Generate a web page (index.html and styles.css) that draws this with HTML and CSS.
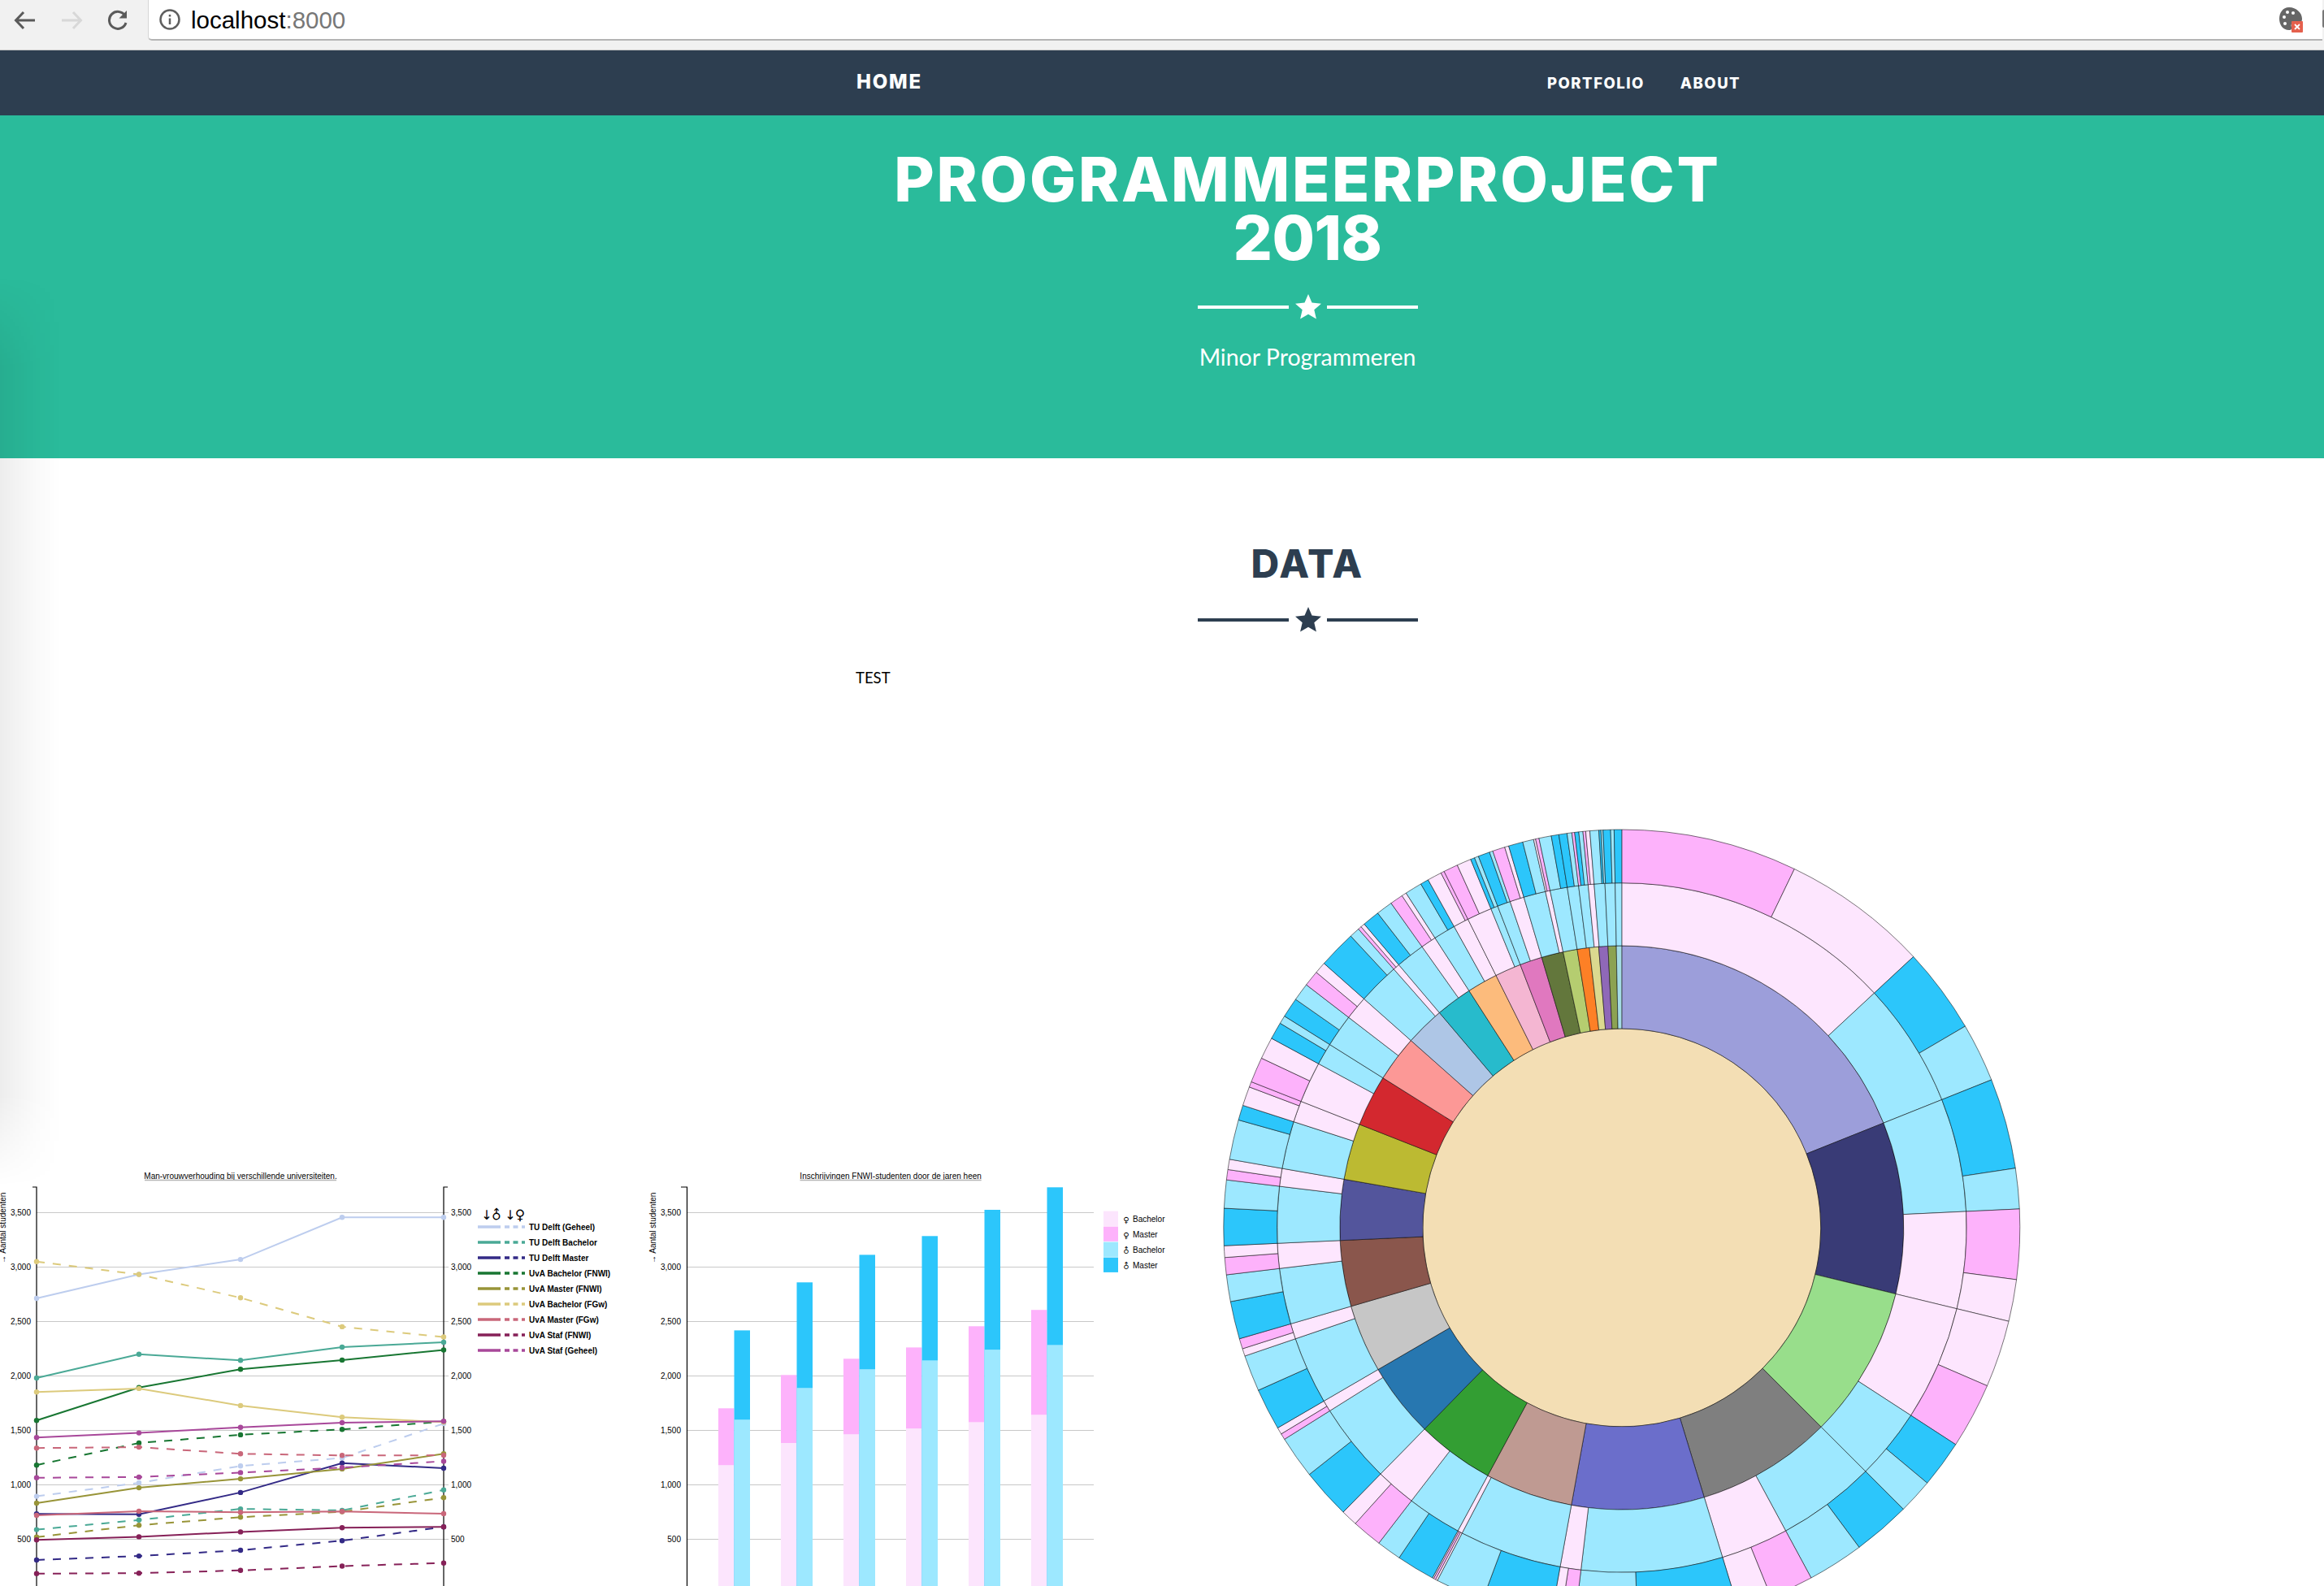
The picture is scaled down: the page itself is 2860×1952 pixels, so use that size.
FILE: index.html
```html
<!DOCTYPE html>
<html lang="en">
<head>
  <meta charset="UTF-8" />
  <title>Programmeerproject 2018</title>
  <link rel="stylesheet" href="styles.css">
</head>
<body>

<!-- browser bar -->
<div class="chrome">
  <div class="chrome-btns">
    <svg class="btn-back" width="28" height="24" viewBox="0 0 28 24"><path d="M26 12H3M12 2L2.5 12L12 22"/></svg>
    <svg class="btn-fwd" width="28" height="24" viewBox="0 0 28 24"><path d="M2 12H25M16 2L25.5 12L16 22"/></svg>
    <svg class="btn-reload" width="28" height="26" viewBox="0 0 28 26"><path d="M23 7.5A10.5 10.5 0 1 0 24 16"/><path class="fill" d="M25 1V10.5H15.5Z"/></svg>
  </div>
  <div class="urlbar">
    <svg class="info" width="26" height="26" viewBox="0 0 26 26"><circle cx="13" cy="13" r="11.5"/><path d="M13 11.5V19M13 7V9.5"/></svg>
    <span class="url">localhost<span class="port">:8000</span></span>
    <svg class="ext" width="30" height="32" viewBox="0 0 30 32">
      <path fill="#666" d="M13 1C5 1 1 8 1 15s4 14 12 14c3 0 4-2 3-4s0-5 3-5h6c3 0 4-2 4-5C29 8 22 1 13 1z"/>
      <circle cx="7" cy="13" r="2" fill="#fff"/><circle cx="11" cy="7" r="2" fill="#fff"/><circle cx="18" cy="8" r="2" fill="#fff"/><circle cx="8" cy="21" r="2" fill="#fff"/>
      <rect x="16" y="18" width="14" height="14" rx="1" fill="#e5604d"/>
      <path stroke="#fff" stroke-width="1.8" d="M20 22l6 6M26 22l-6 6"/>
    </svg>
  </div>
  <span class="chrome-edge"></span>
</div>

<nav class="topnav">
  <a class="brand" href="#">HOME</a>
  <ul class="nav-links">
    <li><a href="#">PORTFOLIO</a></li>
    <li><a href="#">ABOUT</a></li>
  </ul>
</nav>

<header class="hero">
  <h1>PROGRAMMEERPROJECT<br><span class="year">2018</span></h1>
  <div class="divider divider-light">
    <span class="divider-line"></span>
    <svg class="divider-star" viewBox="0 0 32 31"><polygon points="16,0 20.5,10.6 32,11.7 23.3,19.3 25.9,30.6 16,24.7 6.1,30.6 8.7,19.3 0,11.7 11.5,10.6"/></svg>
    <span class="divider-line"></span>
  </div>
  <p class="subtitle">Minor Programmeren</p>
</header>

<section class="data">
  <h2>DATA</h2>
  <div class="divider divider-dark">
    <span class="divider-line"></span>
    <svg class="divider-star" viewBox="0 0 32 31"><polygon points="16,0 20.5,10.6 32,11.7 23.3,19.3 25.9,30.6 16,24.7 6.1,30.6 8.7,19.3 0,11.7 11.5,10.6"/></svg>
    <span class="divider-line"></span>
  </div>
  <p class="test">TEST</p>
</section>

<section class="charts">
  <svg id="lineChart" class="chart-line" width="780" height="593"></svg>
  <svg id="barChart" class="chart-bar" width="620" height="593"></svg>
  <svg id="sunburst" class="chart-sun" width="1000" height="1004"></svg>
</section>

<div class="edge-shade"></div>

<script src="charts.js"></script>
</body>
</html>
```

FILE: styles.css
```css
* {
  box-sizing: border-box;
}

html, body {
  height: 100%;
}

body {
  margin: 0;
  height: 1952px;
  overflow: hidden;
  position: relative;
  background: #fff;
  font-family: "Liberation Sans", Arial, sans-serif;
  color: #000;
}

/* browser bar */
.chrome {
  display: flex;
  height: 62px;
  background: #f1f1f1;
  border-bottom: 1px solid #c9c9c9;
}

.chrome-btns {
  width: 182px;
  flex: none;
  display: flex;
  align-items: center;
  height: 50px;
  padding-left: 17px;
  gap: 29px;
}

.chrome-btns svg {
  fill: none;
  stroke-width: 3;
}

.btn-back { stroke: #5a5a5a; }
.btn-fwd { stroke: #d8d8d8; }
.btn-reload { stroke: #5a5a5a; }
.btn-reload .fill { fill: #5a5a5a; stroke: none; }

.urlbar {
  flex: 1;
  height: 50px;
  background: #fff;
  border-bottom: 2px solid #b4b4b4;
  border-left: 1px solid #d5d5d5;
  border-bottom-left-radius: 5px;
  display: flex;
  align-items: center;
  padding-left: 13px;
}

.info {
  fill: none;
  stroke: #5f5f5f;
  stroke-width: 2.5;
  flex: none;
}

.url {
  margin-left: 13px;
  padding-top: 2px;
  font-size: 29.5px;
  color: #000;
}

.port {
  color: #777;
}

.ext {
  margin-left: auto;
  margin-right: 24px;
  flex: none;
}

.chrome-edge {
  width: 2px;
  height: 22px;
  margin-top: 12px;
  background: #777;
  border-radius: 2px 0 0 2px;
}

/* nav */
.topnav {
  height: 80px;
  background: #2d3e50;
  display: flex;
  align-items: center;
  padding-left: 1054px;
}

.topnav a {
  color: #fff;
  text-decoration: none;
  font-family: Inter, "Open Sans", sans-serif;
  font-weight: 800;
}

.brand {
  font-size: 24px;
  letter-spacing: 1.8px;
  margin-top: -3px;
}

.nav-links {
  list-style: none;
  margin: 0 0 0 769px;
  padding: 0;
  display: flex;
  gap: 44px;
  font-size: 18.5px;
  letter-spacing: 1.5px;
}

/* hero */
.hero {
  height: 422px;
  background: #2abb9b;
  color: #fff;
  text-align: center;
  padding: 42px 0 0 358px;
}

.hero h1 {
  margin: 0;
  font-family: Inter, "Open Sans", sans-serif;
  font-weight: 800;
  font-size: 76px;
  line-height: 72px;
  letter-spacing: 2.7px;
}

.year {
  letter-spacing: -0.5px;
}

.divider {
  display: flex;
  justify-content: center;
  align-items: center;
  margin-top: 34px;
}

.divider-line {
  width: 112px;
  height: 4px;
}

.divider-star {
  width: 32px;
  height: 31px;
  margin: 0 7px 0 8px;
}

.divider-light .divider-line { background: #fff; }
.divider-light .divider-star { fill: #fff; }
.divider-dark .divider-line { background: #2d3e50; }
.divider-dark .divider-star { fill: #2d3e50; }

.subtitle {
  margin: 26px 0 0;
  font-family: Lato, sans-serif;
  font-size: 28.5px;
  line-height: 40px;
}

/* data section */
.data {
  padding: 100px 0 0 358px;
  text-align: center;
}

.data h2 {
  margin: 0;
  font-family: Inter, "Open Sans", sans-serif;
  font-weight: 800;
  font-size: 48px;
  line-height: 60px;
  letter-spacing: 2.2px;
  color: #2d3e50;
}

.data .divider {
  margin-top: 23px;
}

.test {
  margin: 44px 0 0 695px;
  font-family: Lato, sans-serif;
  font-size: 18.5px;
  line-height: 24px;
  text-align: left;
}

/* charts */
.charts {
  display: flex;
  align-items: flex-end;
  margin-top: 164px;
}

.charts svg {
  flex: none;
  overflow: visible;
  display: block;
}

.chart-sun {
  margin-left: 90px;
}

.chart-text {
  font-family: "Liberation Sans", Arial, sans-serif;
  font-size: 10px;
  fill: #000;
}

.chart-legend {
  font-weight: bold;
}

.chart-symbol {
  font-family: "DejaVu Sans", sans-serif;
  fill: #000;
}

.grid {
  stroke: #c8c8c8;
  stroke-width: 1.2;
}

.axis {
  stroke: #000;
  stroke-width: 1.2;
  fill: none;
}

.title-rule {
  stroke: #b5b5b5;
  stroke-width: 1.5;
}

.series {
  fill: none;
  stroke-width: 2;
}

.series-dash {
  stroke-dasharray: 10 10;
}

.arc {
  stroke: rgba(0, 0, 0, 0.75);
  stroke-width: 0.7;
}

/* soft shade on the left edge */
.edge-shade {
  position: absolute;
  left: 0;
  top: 340px;
  width: 76px;
  height: 1120px;
  pointer-events: none;
  background: linear-gradient(to right, rgba(0, 0, 0, 0.07), rgba(0, 0, 0, 0.02) 60%, transparent);
  -webkit-mask-image: linear-gradient(to bottom, transparent, #000 10%, #000 90%, transparent);
  mask-image: linear-gradient(to bottom, transparent, #000 10%, #000 90%, transparent);
}
```

FILE: charts.js
```js
const SVGNS = 'http://www.w3.org/2000/svg';

function add(svg, tag, attrs, text) {
  const el = document.createElementNS(SVGNS, tag);
  for (const k in attrs) el.setAttribute(k, attrs[k]);
  if (text !== undefined) el.textContent = text;
  svg.appendChild(el);
  return el;
}

// both value axes share the same scale, 500 students = 67px
const yOf = v => 473.5 - (v - 500) * 0.134;
const TICKS = [500, 1000, 1500, 2000, 2500, 3000, 3500];
const fmt = v => v >= 1000 ? Math.floor(v / 1000) + ',' + String(v % 1000).padStart(3, '0') : String(v);

function title(svg, text, x1, x2) {
  add(svg, 'text', { class: 'chart-text', x: (x1 + x2) / 2, y: 30, 'text-anchor': 'middle' }, text);
  add(svg, 'line', { class: 'title-rule', x1, x2, y1: 31.5, y2: 31.5 });
}

function yLabel(svg, x) {
  add(svg, 'text', { class: 'chart-text', transform: `translate(${x},134) rotate(-90)` }, '→ Aantal studenten');
}

function gender(svg, symbol, x, y, size) {
  // the male sign is turned so its arrow points straight up
  const turn = symbol === '♂' ? ' rotate(-45)' : '';
  add(svg, 'text', {
    class: 'chart-symbol', 'font-size': size, 'text-anchor': 'middle',
    transform: `translate(${x},${y})${turn}`, 'dominant-baseline': 'central'
  }, symbol);
}

/* ---------- line chart ---------- */
const LINE_X = [45, 171, 296, 421, 546];
const SERIES = [
  ['TU Delft (Geheel)', '#bdcdee', [2713, 2933, 3070, 3457, 3457], [895, 1019, 1173, 1247, 1563]],
  ['TU Delft Bachelor', '#4aa996', [1981, 2199, 2143, 2265, 2310], [589, 677, 779, 766, 953]],
  ['TU Delft Master', '#332a86', [733, 730, 930, 1199, 1153], [310, 346, 399, 487, 614]],
  ['UvA Bachelor (FNWI)', '#187632', [1591, 1893, 2062, 2146, 2239], [1181, 1384, 1460, 1510, 1581]],
  ['UvA Master (FNWI)', '#989438', [832, 973, 1055, 1146, 1285], [520, 629, 703, 753, 882]],
  ['UvA Bachelor (FGw)', '#dcca7c', [1852, 1885, 1728, 1622, 1576], [3050, 2933, 2718, 2452, 2358]],
  ['UvA Master (FGw)', '#c9677a', [720, 758, 748, 756, 735], [1338, 1346, 1285, 1270, 1272]],
  ['UvA Staf (FNWI)', '#862158', [495, 523, 568, 606, 614], [184, 189, 214, 254, 282]],
  ['UvA Staf (Geheel)', '#a8489a', [1434, 1477, 1528, 1571, 1584], [1065, 1072, 1113, 1158, 1217]]
];

function drawSeries(svg, vals, color, dashed) {
  const pts = vals.map((v, i) => LINE_X[i] + ',' + yOf(v).toFixed(1)).join(' ');
  add(svg, 'polyline', { class: 'series' + (dashed ? ' series-dash' : ''), points: pts, stroke: color });
  vals.forEach((v, i) => add(svg, 'circle', { cx: LINE_X[i], cy: yOf(v).toFixed(1), r: 3.2, fill: color }));
}

function drawLineChart() {
  const svg = document.getElementById('lineChart');
  title(svg, 'Man-vrouwverhouding bij verschillende universiteiten.', 178, 414);
  yLabel(svg, 6.5);

  TICKS.forEach(t => {
    add(svg, 'line', { class: 'grid', x1: 45, x2: 552, y1: yOf(t), y2: yOf(t) });
    add(svg, 'text', { class: 'chart-text', x: 38, y: yOf(t) + 3.5, 'text-anchor': 'end' }, fmt(t));
    add(svg, 'text', { class: 'chart-text', x: 555, y: yOf(t) + 3.5 }, fmt(t));
  });
  add(svg, 'path', { class: 'axis', d: 'M40 40H45V600' });
  add(svg, 'path', { class: 'axis', d: 'M551 40H546V600' });

  SERIES.forEach(s => {
    drawSeries(svg, s[3], s[1], true);
    drawSeries(svg, s[2], s[1], false);
  });

  // legend
  add(svg, 'text', { class: 'chart-symbol', 'font-size': 16, x: 599, y: 80, 'text-anchor': 'middle' }, '↓');
  gender(svg, '♂', 611, 74, 16);
  add(svg, 'text', { class: 'chart-symbol', 'font-size': 16, x: 628, y: 80, 'text-anchor': 'middle' }, '↓');
  gender(svg, '♀', 640, 74, 17);
  SERIES.forEach((s, i) => {
    const y = 89 + i * 19;
    add(svg, 'line', { x1: 588, x2: 616, y1: y, y2: y, stroke: s[1], 'stroke-width': 3.5 });
    add(svg, 'line', { x1: 621, x2: 646, y1: y, y2: y, stroke: s[1], 'stroke-width': 3.5, 'stroke-dasharray': '6 4.5' });
    add(svg, 'text', { class: 'chart-text chart-legend', x: 651, y: y + 3.5 }, s[0]);
  });
}

/* ---------- bar chart ---------- */
// female bachelor, female master, male bachelor, male master (stacked totals)
const BARS = [
  [1181, 1703, 1599, 2419],
  [1384, 2009, 1890, 2860],
  [1465, 2158, 2062, 3113],
  [1518, 2262, 2143, 3285],
  [1576, 2457, 2242, 3526],
  [1644, 2607, 2285, 3733]
];
const BAR_COLORS = ['#fce5fd', '#fdb2fb', '#9de8ff', '#2cc6fb'];

function drawBarChart() {
  const svg = document.getElementById('barChart');
  title(svg, 'Inschrijvingen FNWI-studenten door de jaren heen', 204.5, 427.7);
  yLabel(svg, 27);

  TICKS.forEach(t => {
    add(svg, 'line', { class: 'grid', x1: 65.5, x2: 566, y1: yOf(t), y2: yOf(t) });
    add(svg, 'text', { class: 'chart-text', x: 58, y: yOf(t) + 3.5, 'text-anchor': 'end' }, fmt(t));
  });
  add(svg, 'path', { class: 'axis', d: 'M58 40H65.5V600' });

  const BOTTOM = 600;
  BARS.forEach((g, i) => {
    const x = 104 + i * 77;
    const bar = (xx, v, color) => add(svg, 'rect', {
      x: xx, y: yOf(v).toFixed(1), width: 19.5, height: (BOTTOM - yOf(v)).toFixed(1), fill: color
    });
    bar(x, g[1], BAR_COLORS[1]);
    bar(x, g[0], BAR_COLORS[0]);
    bar(x + 19.5, g[3], BAR_COLORS[3]);
    bar(x + 19.5, g[2], BAR_COLORS[2]);
  });

  const rows = [['♀', 'Bachelor'], ['♀', 'Master'], ['♂', 'Bachelor'], ['♂', 'Master']];
  rows.forEach((r, i) => {
    const top = 69.6 + i * 19;
    add(svg, 'rect', { x: 578, y: top, width: 18, height: 18.3, fill: BAR_COLORS[i] });
    gender(svg, r[0], 606, top + 10.5, 10);
    add(svg, 'text', { class: 'chart-text', x: 614, y: top + 13 }, r[1]);
  });
}

/* ---------- sunburst ---------- */
const CX = 505.8, CY = 501;
const R = [245, 347, 424.3, 490];
const C = { p: '#fde6fe', P: '#fdb2fb', b: '#9de8ff', B: '#2cc6fb' };

// every ring: [end angle in degrees clockwise from the top, colour]
const RING1 = [
  [68.2, '#9c9eda'], [103.6, '#393b76'], [135, '#98de8b'], [163, '#7f7f7f'], [190.3, '#6b6ecb'],
  [208.4, '#bf9a92'], [224.4, '#339e33'], [239.8, '#2777b0'], [253.8, '#c6c6c6'], [267.4, '#8a564c'],
  [279.9, '#53559c'], [291.5, '#bcba32'], [302.1, '#d3282f'], [311.6, '#fc9896'], [319.7, '#aec6e6'],
  [327.2, '#27bbcc'], [333.5, '#fcbb7c'], [338.9, '#f4b6d2'], [343.5, '#e078bf'], [348, '#63773c'],
  [350.9, '#b5cd70'], [353.4, '#fd8026'], [355.3, '#dbd98f'], [357.2, '#8f68b8'], [358.9, '#8ca252'], [360, '#a5dbe5']
];
const RING2 = [
  [47.1, 'p'], [68.2, 'b'], [87.3, 'b'], [103.6, 'p'], [123, 'p'], [135, 'b'], [151.6, 'b'], [163, 'p'],
  [186.8, 'b'], [190.3, 'p'], [207.6, 'b'], [208.4, 'p'], [217.6, 'b'], [224.4, 'p'], [237.9, 'b'], [239.8, 'p'],
  [251.2, 'b'], [253.8, 'p'], [263.2, 'b'], [267.4, 'p'], [276.9, 'b'], [279.9, 'p'], [287.9, 'b'], [291.5, 'p'],
  [298.4, 'p'], [302.1, 'b'], [307.6, 'b'], [311.6, 'p'], [318.6, 'b'], [319.7, 'p'], [324.6, 'b'], [327.2, 'p'],
  [330.9, 'b'], [333.5, 'p'], [337.7, 'p'], [338.9, 'b'], [341.1, 'b'], [343.5, 'p'], [347.2, 'b'], [348, 'p'],
  [350.9, 'b'], [352.8, 'b'], [354.4, 'b'], [355.4, 'p'], [357.2, 'b'], [358.9, 'b'], [360, 'b']
];
const RING3 = [
  [25.7, 'P'], [47.1, 'p'], [59.6, 'B'], [68.2, 'b'], [81.4, 'B'], [87.3, 'b'], [97.5, 'P'], [103.6, 'p'],
  [113.4, 'p'], [123, 'P'], [129.9, 'B'], [135, 'b'], [143.4, 'B'], [151.6, 'b'], [158, 'P'], [163, 'p'],
  [177.7, 'B'], [186.8, 'b'], [188.9, 'P'], [190.3, 'p'], [200.5, 'B'], [207.6, 'b'], [207.9, 'p'], [208.2, 'P'],
  [208.4, 'p'], [214, 'B'], [217.6, 'b'], [222, 'P'], [224.4, 'p'], [231.7, 'B'], [237.9, 'b'], [238.8, 'P'],
  [239.8, 'p'], [245.9, 'B'], [251.2, 'b'], [252.3, 'p'], [253.8, 'P'], [259.3, 'B'], [263.2, 'b'], [265.7, 'P'],
  [267.4, 'p'], [272.8, 'B'], [276.9, 'b'], [278.4, 'P'], [279.9, 'p'], [285.7, 'b'], [287.9, 'B'], [290.7, 'p'],
  [291.5, 'P'], [295.2, 'P'], [298.4, 'p'], [300.9, 'B'], [302.1, 'b'], [305, 'B'], [307.6, 'b'], [309.9, 'P'],
  [311.6, 'p'], [317.1, 'B'], [318.6, 'b'], [319.1, 'P'], [319.7, 'p'], [322.2, 'B'], [324.6, 'b'], [326.5, 'P'],
  [327.2, 'p'], [329.7, 'b'], [330.9, 'B'], [333, 'p'], [333.5, 'P'], [335.6, 'P'], [337.7, 'p'], [338.3, 'B'],
  [338.9, 'b'], [340.6, 'B'], [341.1, 'b'], [342.9, 'P'], [343.5, 'p'], [345.6, 'B'], [347.2, 'b'], [347.5, 'p'],
  [348, 'P'], [349.8, 'b'], [350.9, 'B'], [352.1, 'B'], [352.8, 'b'], [353.2, 'P'], [353.8, 'B'], [354.4, 'b'],
  [354.8, 'P'], [355.4, 'p'], [356.7, 'b'], [357, 'B'], [357.3, 'b'], [358.4, 'B'], [358.9, 'b'], [360, 'B']
];

function arcPath(a0, a1, r0, r1) {
  const rad = a => (a - 90) * Math.PI / 180;
  const pt = (r, a) => (CX + r * Math.cos(rad(a))).toFixed(2) + ' ' + (CY + r * Math.sin(rad(a))).toFixed(2);
  const large = a1 - a0 > 180 ? 1 : 0;
  return `M${pt(r1, a0)}A${r1} ${r1} 0 ${large} 1 ${pt(r1, a1)}L${pt(r0, a1)}A${r0} ${r0} 0 ${large} 0 ${pt(r0, a0)}Z`;
}

function drawRing(svg, ring, r0, r1) {
  let start = 0;
  ring.forEach(([end, color]) => {
    add(svg, 'path', { class: 'arc', d: arcPath(start, end, r0, r1), fill: C[color] || color });
    start = end;
  });
}

function drawSunburst() {
  const svg = document.getElementById('sunburst');
  add(svg, 'circle', { class: 'arc', cx: CX, cy: CY, r: R[0], fill: '#f3deb4' });
  drawRing(svg, RING1, R[0], R[1]);
  drawRing(svg, RING2, R[1], R[2]);
  drawRing(svg, RING3, R[2], R[3]);
}

drawLineChart();
drawBarChart();
drawSunburst();
```
